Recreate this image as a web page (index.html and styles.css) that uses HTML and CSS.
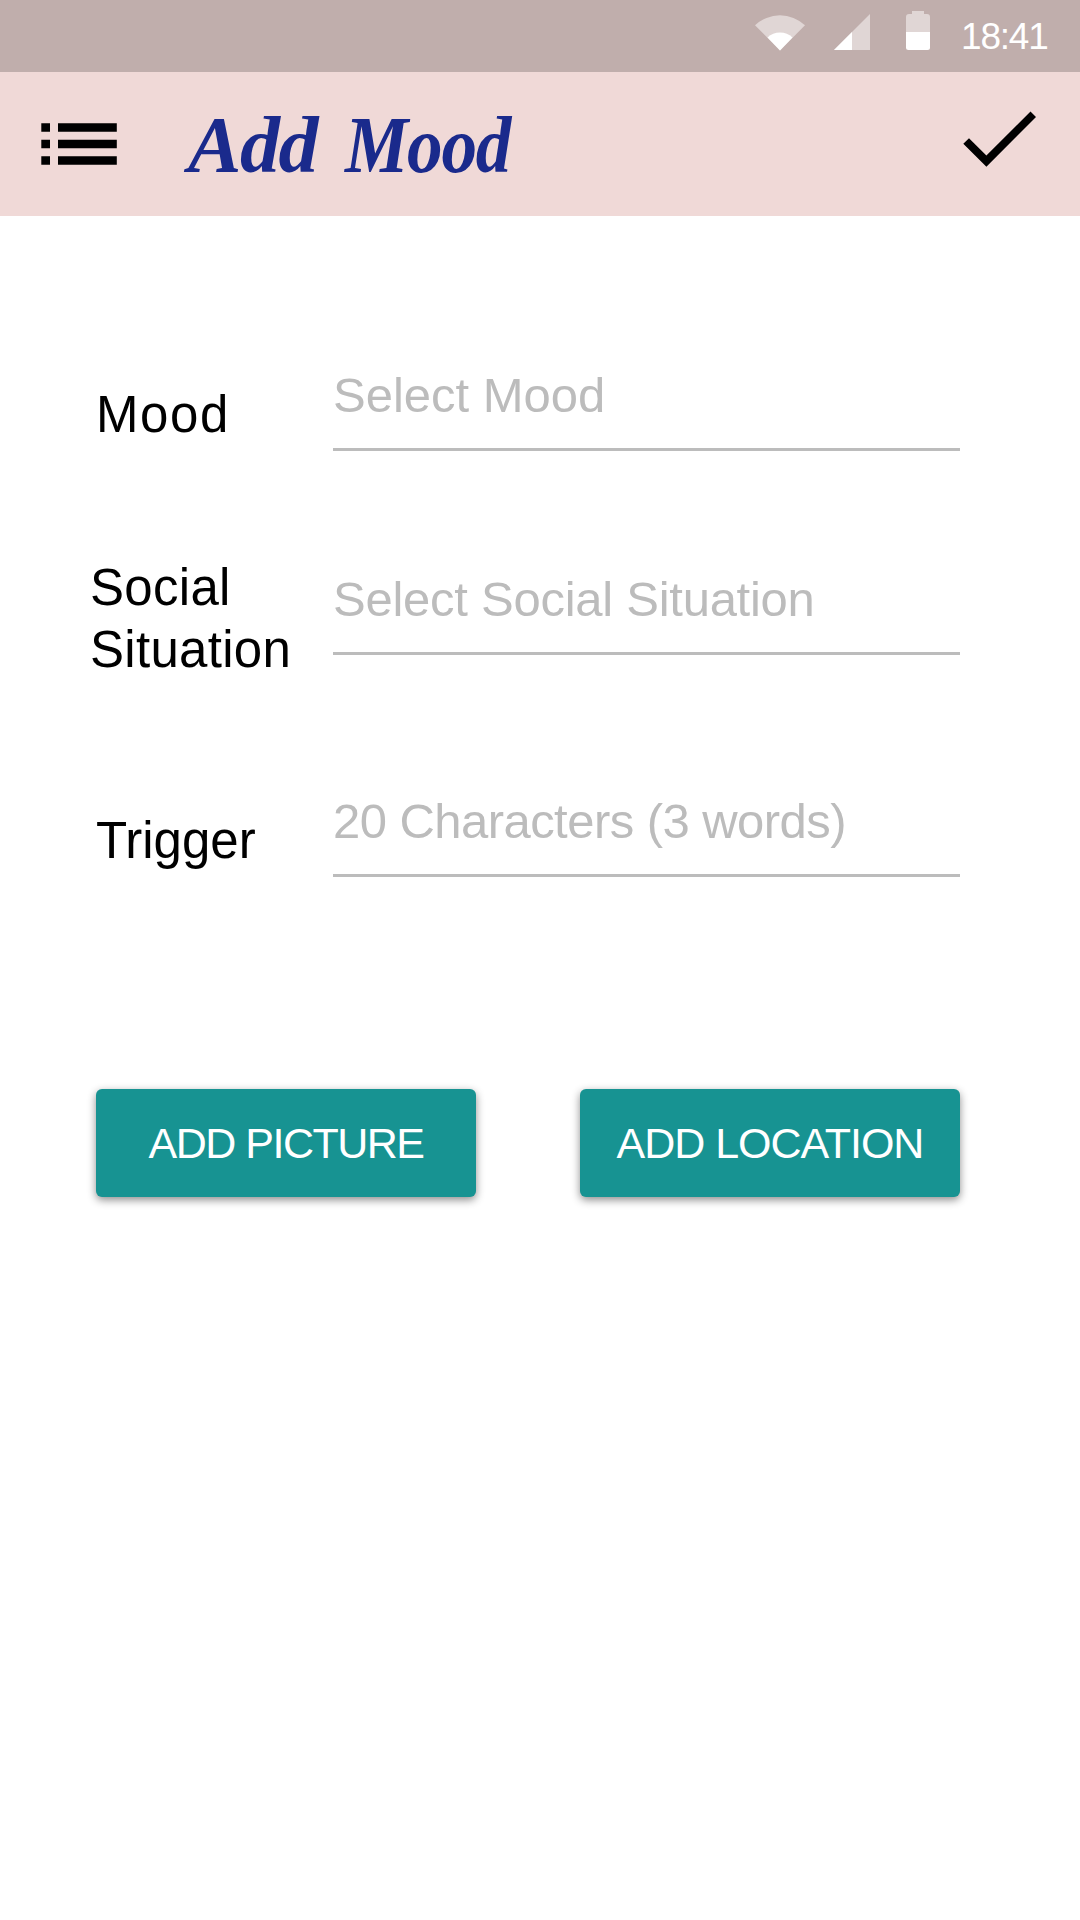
FILE: index.html
```html
<!DOCTYPE html>
<html lang="en">
<head>
<meta charset="utf-8">
<title>Add Mood</title>
<link rel="stylesheet" href="styles.css">
</head>
<body>
<div class="status-bar">
  <svg class="status-icons" width="180" height="44" viewBox="752 10 180 44" aria-hidden="true">
    <path class="dim" d="M755 25.3A36.4 36.4 0 0 1 805 25.3L780 50.4Z"/>
    <path class="lit" d="M767.5 37.6A18 18 0 0 1 792.5 37.6L780 50.4Z"/>
    <path class="dim" d="M834 50L870 14V50Z"/>
    <path class="lit" d="M834 50L852 32V50Z"/>
    <path class="dim" d="M906 32V17Q906 14 909 14H912V11H924V14H927Q930 14 930 17V32Z"/>
    <path class="lit" d="M906 32H930V47.500Q930 50 927.500 50H908.500Q906 50 906 47.500Z"/>
  </svg>
  <span class="clock">18:41</span>
</div>
<header class="app-bar">
  <svg class="menu-icon" width="76" height="42" viewBox="0 0 76 42" aria-hidden="true">
    <path d="M0.300 0.300h8.700v8.500h-8.700zM17 0.300h58.800v8.500h-58.800zM0.300 16.700h8.700v8.500h-8.700zM17 16.700h58.800v8.500h-58.800zM0.300 33.200h8.700v8.500h-8.700zM17 33.200h58.800v8.500h-58.800z"/>
  </svg>
  <h1 class="title">Add <span class="title-word">Mood</span></h1>
  <svg class="check-icon" width="73" height="56" viewBox="0 0 73 56" aria-hidden="true">
    <path d="M0.300 32.800L6 27.200L23.400 44.500L67.500 0.400L73 6L23.400 55.800Z"/>
  </svg>
</header>
<main class="form">
  <div class="row row-mood">
    <div class="label">Mood</div>
    <div class="field">Select Mood</div>
  </div>
  <div class="row row-social">
    <div class="label">Social<br>Situation</div>
    <div class="field">Select Social Situation</div>
  </div>
  <div class="row row-trigger">
    <div class="label">Trigger</div>
    <div class="field">20 Characters (3 words)</div>
  </div>
  <div class="actions">
    <button class="button picture">ADD PICTURE</button>
    <button class="button location">ADD LOCATION</button>
  </div>
</main>
</body>
</html>
```
FILE: styles.css
```css
* {
  box-sizing: border-box;
}

body {
  margin: 0;
  min-height: 1920px;
  background: #fff;
  font-family: "Liberation Sans", sans-serif;
  color: #000;
}

.status-bar {
  display: flex;
  justify-content: flex-end;
  align-items: flex-start;
  height: 72px;
  padding: 10px 32px 0 0;
  background: #c0aeac;
}

.status-icons {
  margin-right: 29px;
}

.dim {
  fill: #e0d6d5;
}

.lit {
  fill: #fff;
}

.clock {
  width: 87px;
  font-size: 37px;
  line-height: 54px;
  letter-spacing: -1.200px;
  white-space: nowrap;
  color: #fff;
}

.app-bar {
  display: flex;
  align-items: flex-start;
  height: 144px;
  padding: 0 44px 0 41px;
  background: #f0d9d7;
}

.menu-icon {
  margin-top: 51px;
}

.title {
  margin: 25px 0 0 71px;
  font-family: "Liberation Serif", serif;
  font-size: 80px;
  font-style: italic;
  font-weight: bold;
  line-height: 96px;
  letter-spacing: -1.400px;
  white-space: nowrap;
  color: #1a2a8c;
}

.title-word {
  display: inline-block;
  margin-left: 9px;
  transform: scaleX(0.89);
  transform-origin: left;
}

.check-icon {
  margin: 39px 0 0 auto;
}

.form {
  padding: 149px 120px 0 96px;
}

.row {
  display: grid;
  grid-template-columns: 237px 627px;
  align-items: start;
}

.label {
  padding-top: 19px;
  font-size: 51px;
  line-height: 62px;
}

.row-mood .label {
  letter-spacing: 1.600px;
}

.field {
  height: 86px;
  border-bottom: 3px solid #bcbcbc;
  font-size: 49px;
  line-height: 60px;
  color: #bcbcbc;
  white-space: nowrap;
}

.row-social {
  margin-top: 104px;
}

.row-social .label {
  height: 124px;
  margin-left: -6px;
  padding-top: 2px;
  letter-spacing: 0.300px;
}

.row-social .field {
  margin-top: 14px;
  letter-spacing: -0.260px;
}

.row-trigger {
  margin-top: 112px;
}

.row-trigger .field {
  letter-spacing: -0.550px;
}

.actions {
  display: flex;
  justify-content: space-between;
  margin-top: 212px;
}

.button {
  width: 380px;
  height: 108px;
  padding: 0;
  border: 0;
  border-radius: 6px;
  background: #179392;
  box-shadow: 0 3px 9px rgba(0, 0, 0, 0.45);
  font-family: inherit;
  font-size: 43px;
  letter-spacing: -1.500px;
  color: #fff;
}

.location {
  letter-spacing: -1.050px;
}
```
